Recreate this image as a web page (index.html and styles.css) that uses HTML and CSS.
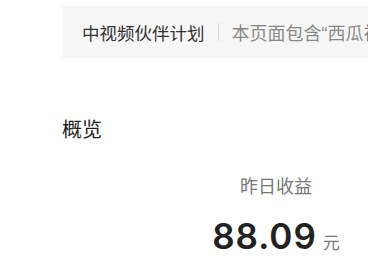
FILE: index.html
```html
<!DOCTYPE html>
<html lang="zh">
<head>
<meta charset="utf-8">
<link rel="stylesheet" href="styles.css">
</head>
<body>
<div class="page">
  <div class="banner">
    <span class="banner-title">中视频伙伴计划</span>
    <span class="banner-sep"></span>
    <span class="banner-desc">本页面包含“西瓜视频”和“抖音”的收益数据</span>
  </div>
  <section class="overview">
    <h2 class="overview-title">概览</h2>
    <div class="stats">
      <div class="stat">
        <div class="stat-label">昨日收益</div>
        <div class="stat-value"><span class="num">88.09</span><span class="unit">元</span></div>
      </div>
    </div>
  </section>
</div>
</body>
</html>
```
FILE: styles.css
```css
html, body {
  margin: 0;
  padding: 0;
  background: #fff;
}
body {
  font-family: "Noto Sans CJK SC", "Noto Sans", sans-serif;
  overflow: hidden;
}
.page {
  padding: 6px 0 0 62px;
}
.banner {
  height: 52px;
  background: #f6f6f6;
  border-radius: 2px;
  display: flex;
  align-items: center;
  padding-left: 20px;
  white-space: nowrap;
  overflow: hidden;
}
.banner-title {
  font-size: 17.5px;
  color: #333;
}
.banner-sep {
  width: 1px;
  height: 18px;
  background: #d8d8d8;
  margin: 0 13px;
  flex: none;
}
.banner-desc {
  font-family: "Liberation Sans", "Noto Sans CJK SC", sans-serif;
  font-size: 18px;
  color: #888;
}
.overview {
  margin-top: 57px;
}
.overview-title {
  margin: 0;
  font-size: 20px;
  font-weight: 400;
  line-height: 28px;
  color: #222;
}
.stats {
  display: grid;
  grid-template-columns: 428px;
  margin-top: 29px;
}
.stat {
  text-align: center;
}
.stat-label {
  font-size: 18px;
  line-height: 26px;
  color: #777;
}
.stat-value {
  margin-top: 18px;
  display: flex;
  justify-content: center;
  align-items: baseline;
  gap: 6px;
}
.num {
  font-family: Inter, Roboto, sans-serif;
  font-weight: 600;
  font-size: 35px;
  letter-spacing: 1px;
  color: #222;
  line-height: 40px;
}
.unit {
  font-size: 17px;
  color: #777;
}
```
